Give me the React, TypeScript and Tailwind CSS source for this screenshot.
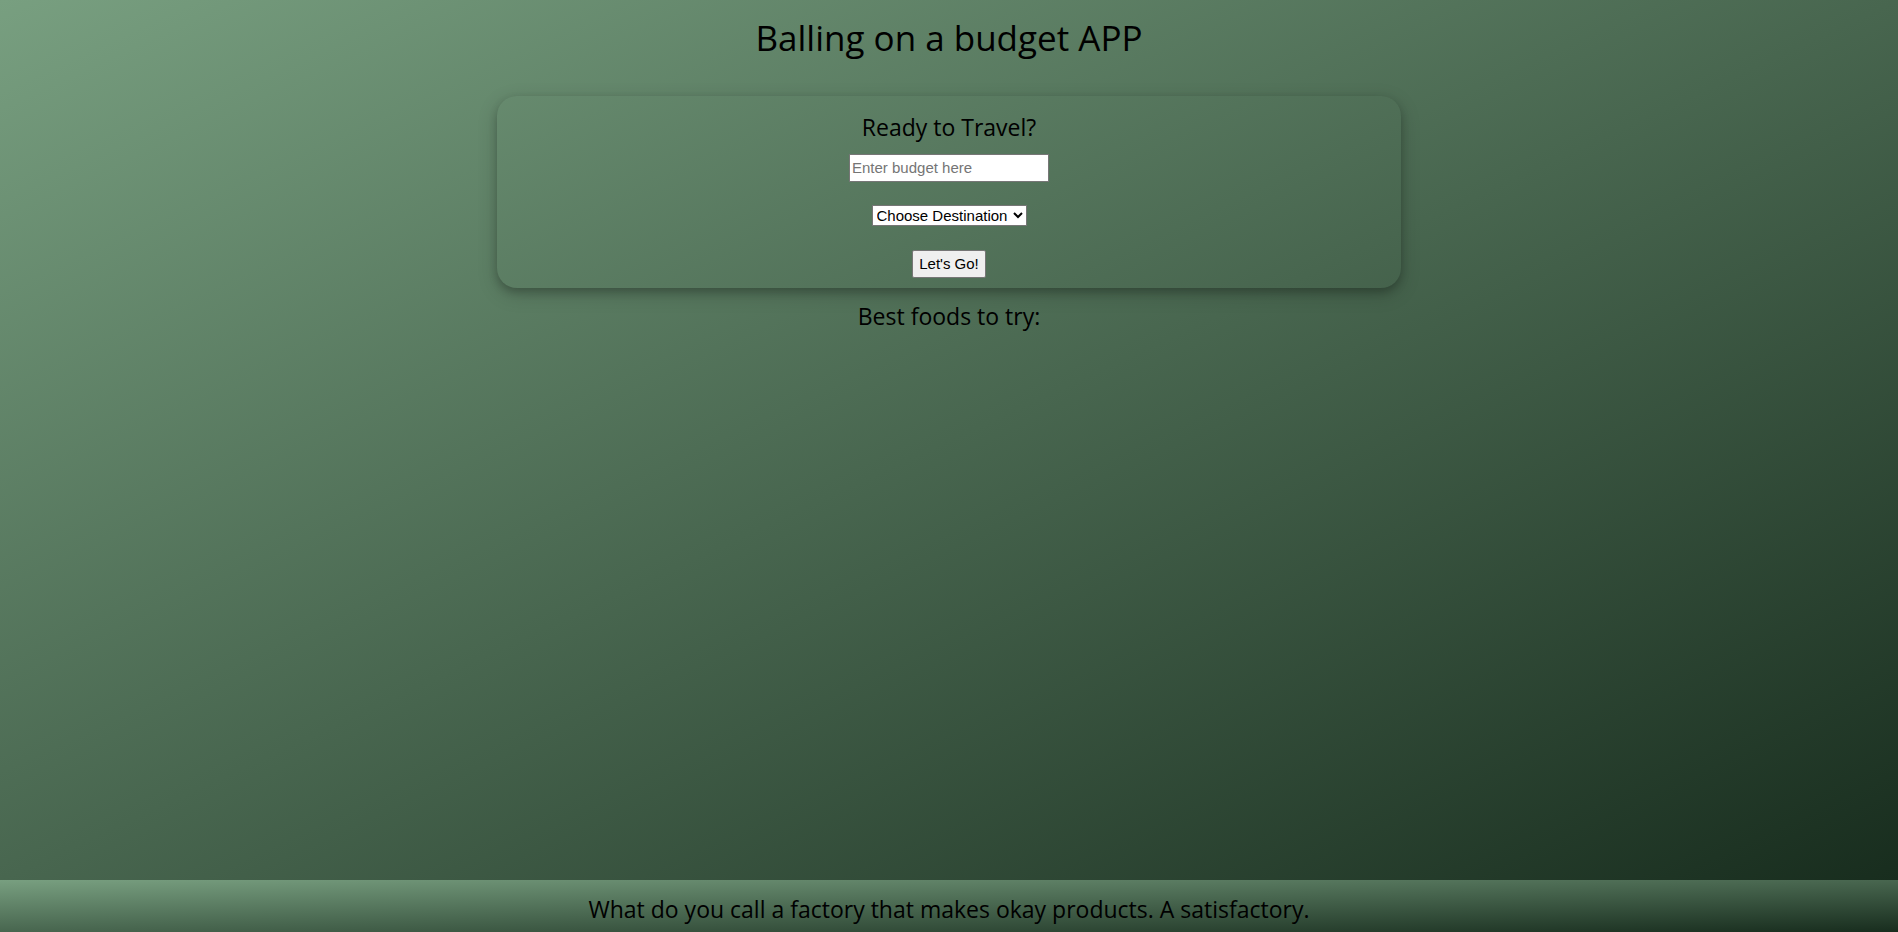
export default function App() {
  return (
    <div className="flex min-h-screen flex-col text-center font-['Open_Sans',sans-serif] text-black">
      <div className="flex flex-1 flex-col bg-linear-[to_bottom_right,#789f80,#182d1e]">
        <header className="px-4 pt-3.5">
          <h1 className="text-[35px] leading-[48px]">Balling on a budget APP</h1>
        </header>
        <main className="flex flex-1 flex-col items-center pt-[34px]">
          <form
            className="flex w-[904px] max-w-full flex-col items-center rounded-[20px] pt-[15px] pb-2.5 shadow-[0_4px_8px_0_rgba(0,0,0,0.2),0_6px_20px_0_rgba(0,0,0,0.19)]"
            onSubmit={(e) => e.preventDefault()}
          >
            <h2 className="text-[23px] leading-8">Ready to Travel?</h2>
            <input
              type="text"
              aria-label="Budget"
              placeholder="Enter budget here"
              className="mt-[11px] h-7 w-[200px] border border-[#767676] bg-white px-0.5 pb-0.5 font-['Liberation_Sans',sans-serif] text-[15px] placeholder:text-[#757575]"
            />
            <select
              aria-label="Destination"
              className="mt-[23px] h-[21px] w-[155px] border border-[#767676] bg-white font-['Liberation_Sans',sans-serif] text-[15px] leading-[18px]"
            >
              <option>Choose Destination</option>
            </select>
            <button
              type="submit"
              className="mt-6 h-7 rounded-xs border border-[#767676] bg-[#efefef] px-1.5 font-['Liberation_Sans',sans-serif] text-[15px] leading-5"
            >
              Let's Go!
            </button>
          </form>
          <h2 className="mt-3 text-[23px] leading-8">Best foods to try:</h2>
        </main>
      </div>
      <footer className="bg-linear-[to_bottom_right,#789f80,#182d1e] pt-[13px] pb-[7px]">
        <p className="text-[23px] leading-8">
          What do you call a factory that makes okay products. A satisfactory.
        </p>
      </footer>
    </div>
  );
}
